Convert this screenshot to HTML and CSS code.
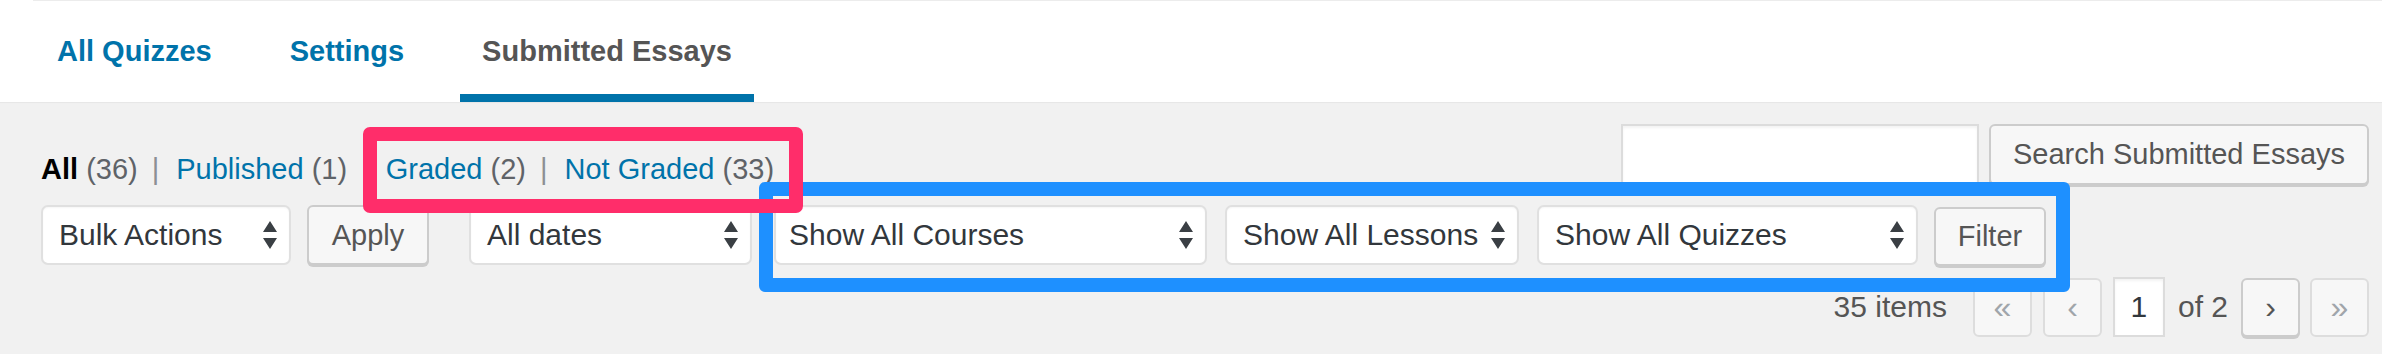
FILE: index.html
```html
<!DOCTYPE html>
<html lang="en">
<head>
<meta charset="utf-8">
<title>Submitted Essays</title>
<link rel="stylesheet" href="styles.css">
</head>
<body>
<div class="page">
  <header class="tabbar">
    <nav class="tabs">
      <a class="tab">All Quizzes</a>
      <a class="tab">Settings</a>
      <a class="tab active">Submitted Essays</a>
    </nav>
  </header>

  <main class="content">
    <div class="row-top">
      <ul class="subsubsub">
        <li><b class="current">All</b> <span class="count">(36)</span></li>
        <li class="sep">|</li>
        <li><a>Published</a> <span class="count">(1)</span></li>
        <li class="sep">|</li>
        <li><a>Graded</a> <span class="count">(2)</span></li>
        <li class="sep">|</li>
        <li><a>Not Graded</a> <span class="count">(33)</span></li>
      </ul>
      <div class="search">
        <div class="input search-input"></div>
        <div class="button search-btn">Search Submitted Essays</div>
      </div>
    </div>

    <div class="row-actions">
      <div class="select w-bulk"><span class="label">Bulk Actions</span><svg class="arr" width="14" height="28" viewBox="0 0 14 28"><path d="M7 0 L14 11 H0 Z M0 17 H14 L7 28 Z"/></svg></div>
      <div class="button apply">Apply</div>
      <div class="select w-dates"><span class="label">All dates</span><svg class="arr" width="14" height="28" viewBox="0 0 14 28"><path d="M7 0 L14 11 H0 Z M0 17 H14 L7 28 Z"/></svg></div>
      <div class="select w-courses"><span class="label">Show All Courses</span><svg class="arr" width="14" height="28" viewBox="0 0 14 28"><path d="M7 0 L14 11 H0 Z M0 17 H14 L7 28 Z"/></svg></div>
      <div class="select w-lessons"><span class="label">Show All Lessons</span><svg class="arr" width="14" height="28" viewBox="0 0 14 28"><path d="M7 0 L14 11 H0 Z M0 17 H14 L7 28 Z"/></svg></div>
      <div class="select w-quizzes"><span class="label">Show All Quizzes</span><svg class="arr" width="14" height="28" viewBox="0 0 14 28"><path d="M7 0 L14 11 H0 Z M0 17 H14 L7 28 Z"/></svg></div>
      <div class="button filter">Filter</div>
    </div>

    <div class="row-pages">
      <span class="num">35 items</span>
      <span class="pbtn disabled first">«</span>
      <span class="pbtn disabled">‹</span>
      <span class="input page-input">1</span>
      <span class="of">of 2</span>
      <span class="pbtn next">›</span>
      <span class="pbtn disabled last">»</span>
    </div>
  </main>

  <div class="mark mark-pink"></div>
  <div class="mark mark-blue"></div>
</div>
</body>
</html>
```

FILE: styles.css
```css
html, body {
  margin: 0;
  padding: 0;
  background: #f1f1f1;
}
body {
  font-family: "Liberation Sans", Arial, Helvetica, sans-serif;
  color: #32373c;
  width: 2382px;
  height: 354px;
  overflow: hidden;
}
.page {
  position: relative;
  height: 354px;
}

/* tabs */
.tabbar {
  background: #fff;
  height: 102px;
  box-shadow: 0 1px 1px rgba(0,0,0,0.04);
}
.tabs {
  margin-left: 33px;
  border-top: 1px solid #ececec;
  padding-left: 2px;
  display: flex;
}
.tab {
  display: block;
  font-size: 29px;
  font-weight: 700;
  line-height: 40px;
  padding: 30px 22px 23px;
  border-bottom: 8px solid transparent;
  margin-right: 34px;
  color: #0073aa;
  white-space: nowrap;
}
.tab.active {
  color: #555;
  border-bottom-color: #0073aa;
}

/* content */
.content {
  padding: 22px 13px 0 41px;
}
.row-top {
  display: flex;
  justify-content: space-between;
  align-items: flex-start;
  height: 63px;
}
.subsubsub {
  list-style: none;
  margin: 27px 0 0;
  padding: 0;
  display: flex;
  font-size: 29px;
  line-height: 36px;
  white-space: pre;
  color: #646970;
}
.subsubsub li { margin: 0; padding: 0; }
.subsubsub .current { color: #000; font-weight: 700; }
.subsubsub a { color: #0073aa; }
.subsubsub .count { color: #5f6368; }
.subsubsub .sep {
  color: #8c8f94;
  margin: 0 17px 0 14px;
}

.search {
  display: flex;
  align-items: flex-start;
}
.input {
  background: #fff;
  border: 2px solid #dcdcdc;
  box-sizing: border-box;
  box-shadow: inset 0 2px 3px rgba(0,0,0,0.05);
}
.search-input {
  width: 358px;
  height: 62px;
  margin-right: 10px;
}

.button {
  box-sizing: border-box;
  height: 61px;
  background: #f7f7f7;
  border: 2px solid #cccccc;
  border-radius: 6px;
  box-shadow: 0 2px 0 #cccccc;
  color: #555;
  font-size: 29px;
  display: flex;
  align-items: center;
  justify-content: center;
  white-space: nowrap;
}
.search-btn { width: 380px; }

/* actions row */
.row-actions {
  display: flex;
  align-items: flex-start;
  margin-top: 18px;
  height: 60px;
}
.select {
  box-sizing: border-box;
  height: 60px;
  background: #fff;
  border: 2px solid #e0e0e0;
  border-radius: 7px;
  box-shadow: inset 0 1px 2px rgba(0,0,0,0.04);
  display: flex;
  align-items: center;
  padding: 0 12px 0 16px;
  font-size: 30px;
  color: #32373c;
  white-space: nowrap;
}
.select .label { flex: none; }
.select .arr {
  flex: none;
  margin-left: auto;
  fill: #3a3f44;
}
.w-bulk { width: 250px; }
.apply { width: 122px; margin-left: 16px; height: 60px; }
.w-dates { width: 283px; margin-left: 40px; }
.w-courses { width: 433px; margin-left: 22px; padding-left: 13px; }
.w-lessons { width: 294px; margin-left: 18px; }
.w-quizzes { width: 381px; margin-left: 18px; }
.filter { width: 112px; margin-left: 16px; height: 59px; margin-top: 2px; }

/* pagination */
.row-pages {
  display: flex;
  justify-content: flex-end;
  align-items: center;
  margin-top: 12px;
  height: 60px;
  font-size: 30px;
  color: #555;
}
.num { margin-right: 26px; }
.pbtn {
  box-sizing: border-box;
  width: 59px;
  height: 59px;
  border: 2px solid #dddddd;
  border-radius: 6px;
  background: #f7f7f7;
  display: flex;
  align-items: center;
  justify-content: center;
  font-size: 32px;
  margin-right: 11px;
}
.pbtn.disabled { color: #a0a5aa; }
.pbtn.next {
  color: #555;
  border-color: #cccccc;
  box-shadow: 0 2px 0 #cccccc;
  margin-right: 10px;
}
.pbtn.last { margin-right: 0; }
.page-input {
  width: 52px;
  height: 60px;
  display: flex;
  align-items: center;
  justify-content: center;
  color: #32373c;
  margin-right: 13px;
}
.of { margin-right: 13px; }

/* annotation overlays */
.mark {
  position: absolute;
  box-sizing: border-box;
  pointer-events: none;
}
.mark-pink {
  left: 363px;
  top: 127px;
  width: 440px;
  height: 86px;
  border: 14px solid #ff2d6a;
  border-radius: 7px;
  z-index: 3;
}
.mark-blue {
  left: 759px;
  top: 182px;
  width: 1311px;
  height: 110px;
  border: 14px solid #1e90ff;
  border-radius: 6px;
  z-index: 2;
}
```
